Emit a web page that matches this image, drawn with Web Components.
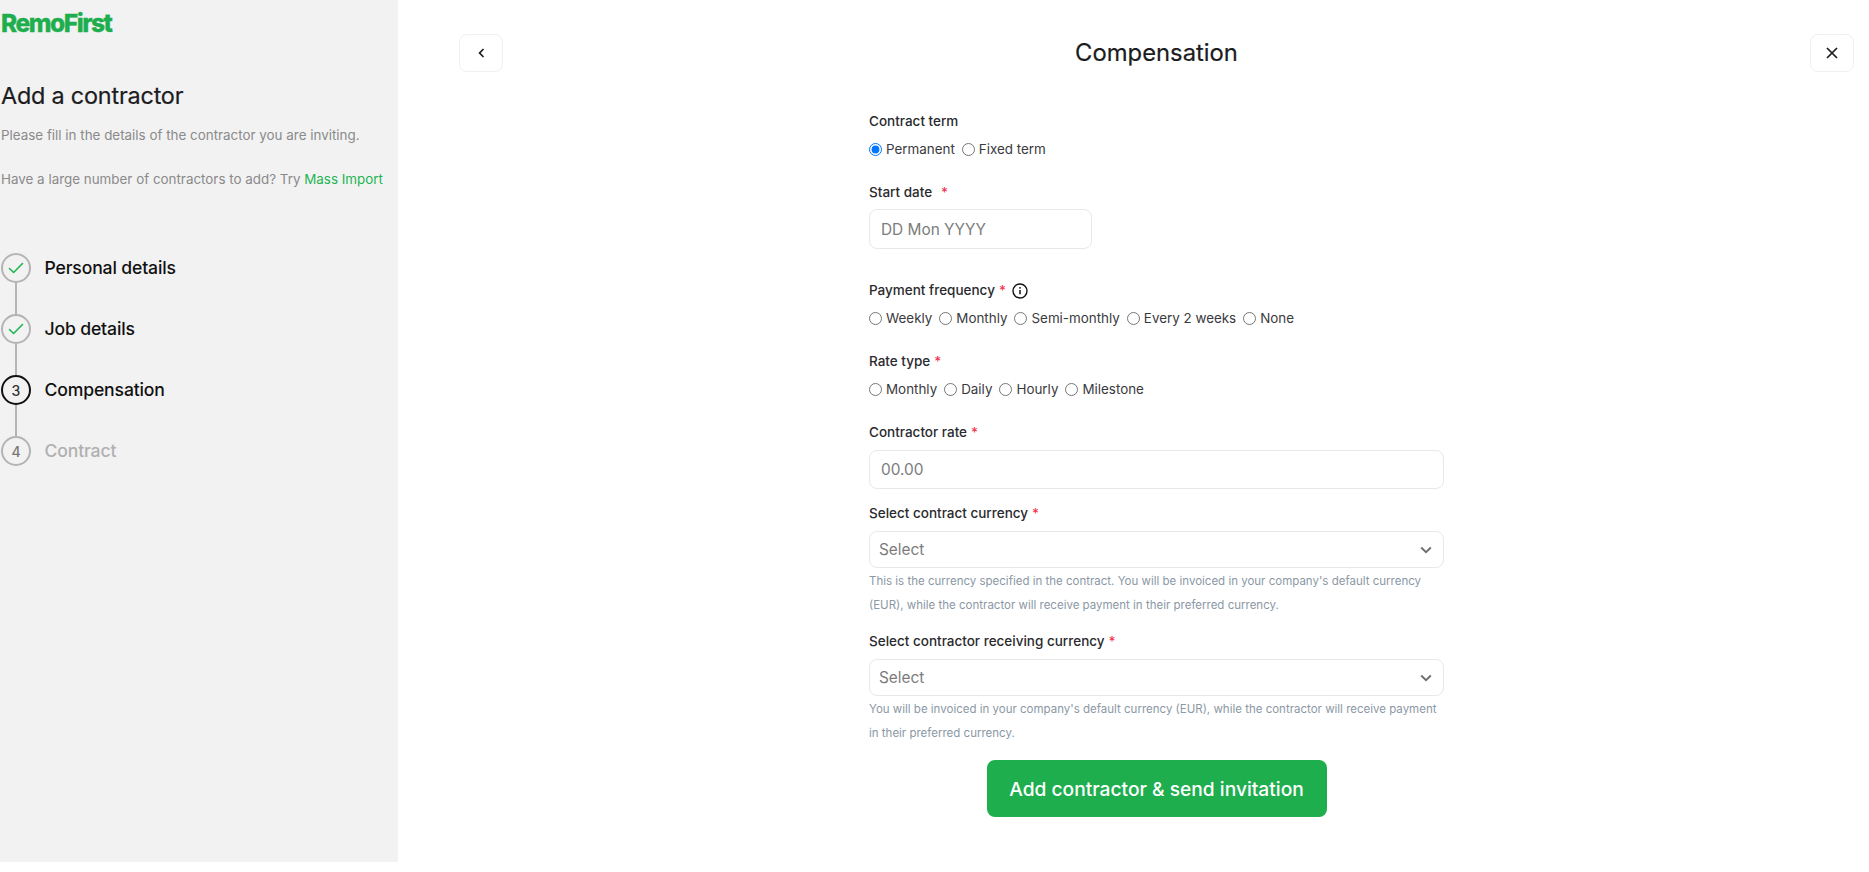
<!DOCTYPE html>
<html lang="en"><head><meta charset="utf-8"><title>Add a contractor</title>
<style>
html,body{margin:0;padding:0;background:#fff}
body{font-family:Inter,"Liberation Sans",sans-serif;height:872px;overflow:hidden}
</style></head>
<body>
<rf-app>
  <rf-sidebar slot="side">
    <rf-step state="done" label="Personal details"></rf-step>
    <rf-step state="done" label="Job details"></rf-step>
    <rf-step state="current" n="3" label="Compensation"></rf-step>
    <rf-step state="todo" n="4" label="Contract" last></rf-step>
  </rf-sidebar>
  <rf-main slot="main" heading="Compensation">
    <rf-field label="Contract term" style="--top:0px;--gap:8px">
      <rf-radios options="Permanent|Fixed term" checked="0"></rf-radios>
    </rf-field>
    <rf-field label="Start date" req="wide" style="--top:23px;--gap:7px">
      <rf-input placeholder="DD Mon YYYY" style="width:223px;height:40px"></rf-input>
    </rf-field>
    <rf-field label="Payment frequency" req="near" info style="--top:31px;--gap:8px">
      <rf-radios options="Weekly|Monthly|Semi-monthly|Every 2 weeks|None"></rf-radios>
    </rf-field>
    <rf-field label="Rate type" req="near" style="--top:23px;--gap:8px">
      <rf-radios options="Monthly|Daily|Hourly|Milestone"></rf-radios>
    </rf-field>
    <rf-field label="Contractor rate" req="near" style="--top:23px;--gap:8px">
      <rf-input placeholder="00.00" style="height:39px"></rf-input>
    </rf-field>
    <rf-field label="Select contract currency" req="near" style="--top:14px;--gap:8px">
      <rf-select help="This is the currency specified in the contract. You will be invoiced in your company's default currency (EUR), while the contractor will receive payment in their preferred currency."></rf-select>
    </rf-field>
    <rf-field label="Select contractor receiving currency" req="near" style="--top:14px;--gap:8px">
      <rf-select help="You will be invoiced in your company's default currency (EUR), while the contractor will receive payment in their preferred currency."></rf-select>
    </rf-field>
    <rf-button>Add contractor &amp; send invitation</rf-button>
  </rf-main>
</rf-app>
<script>
const def=(name,html)=>{
  customElements.define(name,class extends HTMLElement{
    connectedCallback(){
      if(this.shadowRoot)return;
      const r=this.attachShadow({mode:'open'});
      r.innerHTML=typeof html==='function'?html(this):html;
    }
  });
};
const F='Inter,"Liberation Sans",sans-serif';
def('rf-app',`<style>
:host{display:flex;width:1869px;height:872px;align-items:flex-start}
.s{flex:0 0 398px;width:398px;min-width:0;height:862px;background:#f2f2f2}
.m{flex:1;min-width:0}
</style><div class="s"><slot name="side"></slot></div><div class="m"><slot name="main"></slot></div>`);
def('rf-sidebar',`<style>
:host{display:block;font-family:${F}}
.logo{margin:10px 0 0 1px;height:27px;font:800 24.5px/27px Inter,sans-serif;letter-spacing:-1.45px;color:#1eae4e;-webkit-text-stroke:.3px #1eae4e}
h1{margin:42.5px 0 0 1px;font:400 23.4px/32px Inter,sans-serif;letter-spacing:-.2px;color:#1c1c1e;-webkit-text-stroke:.2px #1c1c1e}
p{margin:0 0 0 1px;font:400 13.4px/20px Inter,sans-serif;color:#8a8a8a;white-space:nowrap}
.p1{margin-top:13px}.p2{margin-top:24px}
a{color:#1eb553;text-decoration:none}
.steps{margin-top:64px;display:flex;flex-direction:column}
</style><div class="logo">RemoFirst</div>
<h1>Add a contractor</h1>
<p class="p1">Please fill in the details of the contractor you are inviting.</p>
<p class="p2">Have a large number of contractors to add? Try <a href="#">Mass Import</a></p>
<div class="steps"><slot></slot></div>`);
def('rf-step',el=>{
  const st=el.getAttribute('state'),n=el.getAttribute('n')||'',last=el.hasAttribute('last');
  const check='<svg width="16" height="12" viewBox="0 0 16 12" fill="none"><path d="M1.5 6.5 5.6 10.5 14.5 1.5" stroke="#1eb553" stroke-width="1.6" stroke-linecap="round" stroke-linejoin="round"/></svg>';
  return `<style>
:host{display:flex;height:61.33px;align-items:flex-start;font-family:${F}}
.c{position:relative;margin-left:1px;flex:0 0 30px;height:30px;box-sizing:border-box;border-radius:50%;border:2px solid ${st==='current'?'#111':'#b4b4b4'};display:flex;align-items:center;justify-content:center;font:500 14px Inter,sans-serif;color:${st==='current'?'#333':'#777'}}
.l{position:absolute;left:50%;margin-left:-1px;top:28px;width:2px;height:31.5px;background:#b4b4b4}
.t{margin-left:13.5px;font:500 17.6px/30px Inter,sans-serif;letter-spacing:-.15px;color:${st==='todo'?'#b0b0b0':'#111'}}
</style><div class="c">${st==='done'?check:n}${last?'':'<div class="l"></div>'}</div><div class="t">${el.getAttribute('label')}</div>`;
});
def('rf-main',el=>`<style>
:host{display:block;font-family:${F};padding:34px 15px 0 61px;box-sizing:border-box}
header{display:flex;align-items:center;justify-content:space-between;height:38px}
h2{margin:0;font:400 23.8px/32px Inter,sans-serif;color:#1c1c1e;-webkit-text-stroke:.2px #1c1c1e}
button{width:44px;height:38px;padding:0;background:#fff;border:1px solid #f0f0f0;border-radius:8px;display:flex;align-items:center;justify-content:center}
.form{width:575px;margin:39px auto 0;display:flex;flex-direction:column}
</style><header>
<button aria-label="Back"><svg width="12" height="12" viewBox="0 0 12 12" fill="none"><path d="M8.5 2 4.6 6 8.5 10" stroke="#1c1c1e" stroke-width="1.7"/></svg></button>
<h2>${el.getAttribute('heading')}</h2>
<button aria-label="Close"><svg width="14" height="14" viewBox="0 0 14 14" fill="none"><path d="M2 2 12 12M12 2 2 12" stroke="#1c1c1e" stroke-width="1.7"/></svg></button>
</header><div class="form"><slot></slot></div>`);
def('rf-field',el=>{
  const req=el.getAttribute('req');
  const star=req?`<span class="${req}">*</span>`:'';
  const info=el.hasAttribute('info')?'<svg class="i" width="16" height="16" viewBox="0 0 16 16" fill="none"><circle cx="8" cy="8" r="7" stroke="#111" stroke-width="1.4"/><path d="M8 7v4.2" stroke="#111" stroke-width="1.5"/><circle cx="8" cy="4.8" r=".9" fill="#111"/></svg>':'';
  return `<style>
:host{display:block;margin-top:var(--top,0)}
.lab{display:flex;align-items:center;height:20px;font:450 13.5px/20px ${F};color:#2a2a2e;white-space:nowrap}
span{color:#f5304f}
.wide{margin-left:9px}.near{margin-left:4px}
.i{margin-left:6px;position:relative;top:1px}
.b{margin-top:var(--gap,8px)}
</style><div class="lab">${el.getAttribute('label')}${star}${info}</div><div class="b"><slot></slot></div>`;
});
def('rf-radios',el=>{
  const ck=el.getAttribute('checked');
  const name='g'+Math.random().toString(36).slice(2);
  const items=el.getAttribute('options').split('|').map((o,i)=>`<label><input type="radio" name="${name}"${String(i)===ck?' checked':''}>${o}</label>`).join('');
  return `<style>
:host{display:flex;gap:7px;height:20px;align-items:center;font:400 13.4px/20px ${F};color:#3a3a3e}
label{display:flex;align-items:center;gap:4px;white-space:nowrap}
input{margin:0;width:13px;height:13px}
</style>${items}`;
});
def('rf-input',el=>`<style>
:host{display:block;box-sizing:border-box;border:1px solid #e8e8ea;border-radius:8px;background:#fff;padding:0 11px;font:400 15.4px ${F};color:#7c7c7c}
div{height:100%;display:flex;align-items:center}
</style><div>${el.getAttribute('placeholder')}</div>`);
def('rf-select',el=>`<style>
:host{display:block;font-family:${F}}
.box{box-sizing:border-box;height:37px;border:1px solid #e8e8ea;border-radius:8px;background:#fff;padding:0 11px 0 9px;display:flex;align-items:center;justify-content:space-between;font:400 15.4px ${F};color:#7c7c7c}
p{margin:0;padding-top:1px;font:400 11.5px/24px ${F};color:#8b98a5}
</style><div class="box"><span>Select</span><svg width="12" height="8" viewBox="0 0 12 8" fill="none"><path d="M1.2 1.5 6 6.2 10.8 1.5" stroke="#6f6f6f" stroke-width="1.9"/></svg></div><p>${el.getAttribute('help')}</p>`);
def('rf-button',`<style>
:host{display:block;width:340px;align-self:center;margin-top:15px}
button{display:block;width:100%;height:57px;border:0;border-radius:8px;background:#1eae4e;color:#fff;font:500 19.2px ${F};padding:0}
</style><button><slot></slot></button>`);
</script>
</body></html>
